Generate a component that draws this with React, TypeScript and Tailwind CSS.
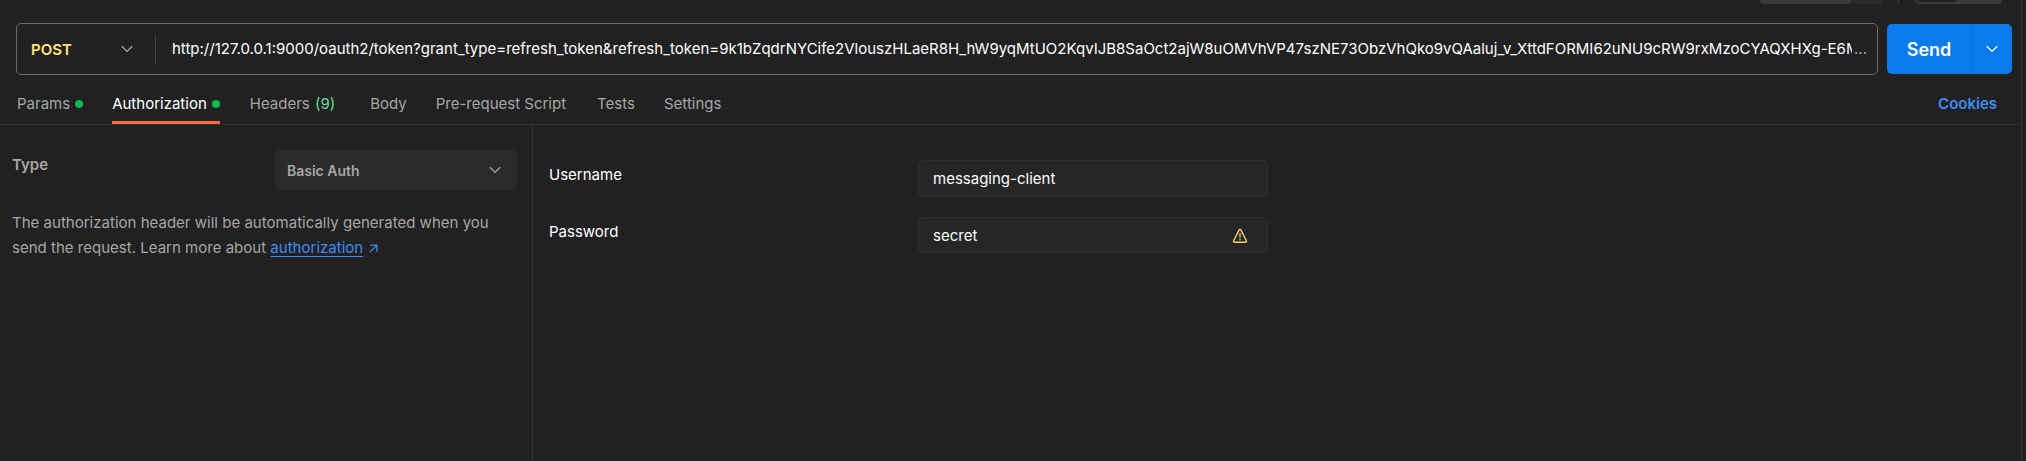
import { ReactNode } from "react";

const URL_TEXT =
  "http://127.0.0.1:9000/oauth2/token?grant_type=refresh_token&refresh_token=9k1bZqdrNYCife2VlouszHLaeR8H_hW9yqMtUO2KqvIJB8SaOct2ajW8uOMVhVP47szNE73ObzVhQko9vQAaluj_v_XttdFORMI62uNU9cRW9rxMzoCYAQXHXg-E6M";

function Chevron({ className }: { className: string }) {
  return (
    <svg viewBox="0 0 12 8" className={`h-2 w-3 shrink-0 ${className}`} fill="none" stroke="currentColor" strokeWidth="1.3">
      <path d="M0.8 1.2 6 6.4 11.2 1.2" />
    </svg>
  );
}

function Tab({ children, dot, active, className = "" }: { children: ReactNode; dot?: boolean; active?: boolean; className?: string }) {
  return (
    <div className={`flex h-[41px] items-center border-b-[3px] pt-1 ${active ? "border-[#ff6c37] text-white" : "border-transparent"} ${className}`}>
      <span>{children}</span>
      {dot && <span className="ml-[5px] size-2 rounded-full bg-[#0cbb52]" />}
    </div>
  );
}

function Field({ label, value, warning, className }: { label: string; value: string; warning?: boolean; className: string }) {
  return (
    <div className={`flex items-start ${className}`}>
      <label className="mt-[5px] w-[369px] leading-5">{label}</label>
      <div className="flex h-full w-[350px] items-center justify-between rounded-[5px] border border-[#303030] bg-[#262626] pr-[19px] pl-[14px]">
        <span className="pt-[2px]">{value}</span>
        {warning && (
          <svg viewBox="0 0 16 16" className="mt-[2px] size-4" fill="none" stroke="#f2d675" strokeWidth="1.35" strokeLinejoin="round">
            <path d="M7.2 1.9a.9.9 0 0 1 1.6 0l5.6 10.9a.9.9 0 0 1-.8 1.4H2.4a.9.9 0 0 1-.8-1.4z" />
            <path d="M8 5.3v4.2M8 10.8v1.4" />
          </svg>
        )}
      </div>
    </div>
  );
}

export default function App() {
  return (
    <div className="flex h-[461px] w-[2026px] overflow-hidden bg-[#212121] font-[Inter,sans-serif] text-[15px] text-[#a6a6a6]">
      <div className="flex w-[2022px] flex-col border-r border-[#363636]">
        <div className="flex h-[23px] items-start">
          <div className="ml-[1760px] h-1 w-[92px] rounded-b-[5px] bg-[#3a3a3a]" />
          <div className="ml-px h-1 w-[30px] rounded-b-[5px] bg-[#2b2b2b]" />
          <div className="ml-[15px] h-1 w-px bg-[#363636]" />
          <div className="ml-4 h-1 w-[87px] rounded-b-[5px] bg-[#3a3a3a] pl-[2px]">
            <div className="h-[2px] w-10 rounded-b-[3px] bg-[#212121]" />
          </div>
        </div>

        <div className="flex h-[52px] items-center pl-4">
          <div className="flex h-full w-[1862px] items-center rounded-[5px] border border-[#6b6b6b]">
            <div className="flex h-[30px] w-[139px] items-center justify-between border-r border-[#404040] pr-[22px] pl-[14px]">
              <span className="pt-[2px] font-semibold text-[#ffe47e]">POST</span>
              <Chevron className="text-[#a6a6a6]" />
            </div>
            <div className="ml-4 w-[1680px] overflow-hidden whitespace-nowrap text-white">{URL_TEXT}</div>
            <span className="ml-[2px]">...</span>
          </div>
          <div className="ml-[9px] flex h-[50px] w-[125px] rounded-[5px] bg-[#097bed] text-white">
            <button className="w-[85px] border-r border-[#0a6fd4] text-[18px] font-semibold">Send</button>
            <button className="flex flex-1 items-center justify-center">
              <Chevron className="" />
            </button>
          </div>
        </div>

        <div className="flex h-[50px] items-end border-b border-[#303030] pr-6 pl-[17px]">
          <Tab dot>Params</Tab>
          <Tab dot active className="ml-[29px]">Authorization</Tab>
          <Tab className="ml-[30px]">
            Headers <span className="ml-px text-[#6bdd9a]">(9)</span>
          </Tab>
          <Tab className="ml-[35px]">Body</Tab>
          <Tab className="ml-[29px]">Pre-request Script</Tab>
          <Tab className="ml-[31px]">Tests</Tab>
          <Tab className="ml-[29px]">Settings</Tab>
          <Tab className="ml-auto font-semibold text-[#3d8df5]">Cookies</Tab>
        </div>

        <div className="flex flex-1">
          <aside className="w-[533px] border-r border-[#303030] pt-[25px] pr-[15px] pl-3">
            <div className="flex items-start justify-between">
              <span className="mt-[5px] leading-5 font-semibold">Type</span>
              <div className="flex h-10 w-[242px] items-center justify-between rounded-[5px] bg-[#2b2b2b] pr-4 pl-3 text-[14px] font-semibold">
                Basic Auth
                <Chevron className="text-[#a6a6a6]" />
              </div>
            </div>
            <p className="mt-5 leading-[25px] tracking-[0.015px] whitespace-nowrap">
              The authorization header will be automatically generated when you
              <br />
              send the request. Learn more about{" "}
              <a className="text-[#3d8df5] underline decoration-1 underline-offset-[3px] [text-decoration-skip-ink:none]">authorization</a>
              <svg viewBox="0 0 10 10" className="ml-[6px] inline size-[9px]" fill="none" stroke="#3d8df5" strokeWidth="1.4">
                <path d="M1.5 1.2h7.3v7.3M8.8 1.2.8 9.2" />
              </svg>
            </p>
          </aside>
          <main className="pt-[35px] pl-4 text-white">
            <Field label="Username" value="messaging-client" className="h-[37px]" />
            <Field label="Password" value="secret" warning className="mt-5 h-9" />
          </main>
        </div>
      </div>
    </div>
  );
}
